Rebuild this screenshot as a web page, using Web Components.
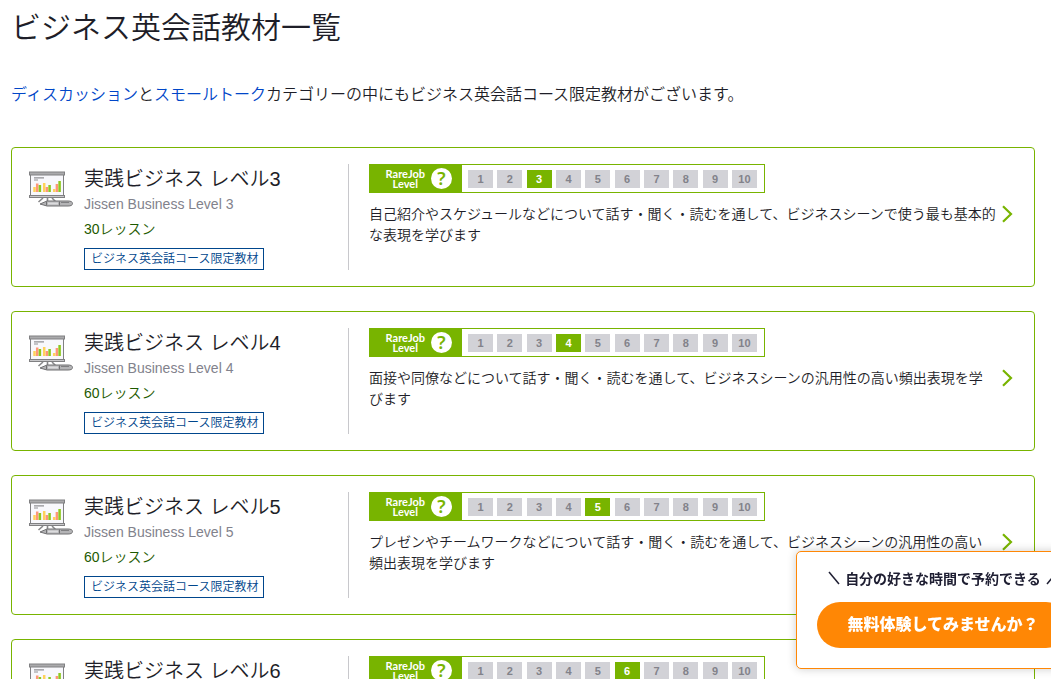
<!DOCTYPE html>
<html lang="ja">
<head>
<meta charset="utf-8">
<meta name="viewport" content="width=device-width, initial-scale=1">
<title>ビジネス英会話教材一覧</title>
<style>
  body {
    margin: 0;
    background: #fff;
    color: #1e1e28;
    font-family: "Liberation Sans", "Noto Sans CJK JP", sans-serif;
    font-size: 14px;
  }
</style>
</head>
<body>
<material-page></material-page>

<template id="page-template">
  <style>
    :host { display: block; padding: 8px 16px 24px 11px; }
    h1 { margin: 0; font-size: 30px; line-height: 40px; font-weight: 350; }
    p { margin: 35px 0 0; font-size: 16px; line-height: 24px; font-weight: 350; }
    a { color: #0046c8; text-decoration: none; }
    .list { display: grid; gap: 24px; margin-top: 40px; }
  </style>
  <h1>ビジネス英会話教材一覧</h1>
  <p><a href="#discussion">ディスカッション</a>と<a href="#smalltalk">スモールトーク</a>カテゴリーの中にもビジネス英会話コース限定教材がございます。</p>
  <div class="list">
    <material-card level="3" lessons="30">自己紹介やスケジュールなどについて話す・聞く・読むを通して、ビジネスシーンで使う最も基本的<br>な表現を学びます</material-card>
    <material-card level="4" lessons="60">面接や同僚などについて話す・聞く・読むを通して、ビジネスシーンの汎用性の高い頻出表現を学<br>びます</material-card>
    <material-card level="5" lessons="60">プレゼンやチームワークなどについて話す・聞く・読むを通して、ビジネスシーンの汎用性の高い<br>頻出表現を学びます</material-card>
    <material-card level="6" lessons="60"></material-card>
  </div>
  <trial-banner></trial-banner>
</template>

<template id="card-template">
  <style>
    :host { display: block; }
    .card {
      display: flex;
      min-height: 106px;
      padding: 16px;
      border: 1px solid #78b400;
      border-radius: 4px;
      color: inherit;
      text-decoration: none;
    }
    .summary {
      display: flex;
      flex: none;
      gap: 12px;
      width: 320px;
      border-right: 1px solid #c8c8cc;
    }
    board-icon { flex: none; margin-top: 6px; }
    .names { display: flex; flex-direction: column; align-items: flex-start; }
    h2 { margin: 0; font-size: 20px; line-height: 30px; font-weight: 350; }
    .en { font-size: 14px; line-height: 20px; color: #82828c; }
    .lessons { margin-top: 5px; font-size: 14px; line-height: 20px; font-weight: 350; color: #1e5a00; }
    .tag {
      margin-top: 9px;
      padding: 0 5px 0 6px;
      border: 1px solid #00468c;
      color: #00468c;
      font-size: 12px;
      line-height: 20px;
      font-weight: 350;
    }
    .detail { flex: 1; min-width: 0; padding-left: 20px; }
    .text { margin-top: 11px; font-size: 14px; line-height: 21px; font-weight: 350; }
    .arrow { flex: none; display: block; margin: 41px 5px 0 0; }
  </style>
  <a class="card" href="#material">
    <div class="summary">
      <board-icon></board-icon>
      <div class="names">
        <h2></h2>
        <div class="en"></div>
        <div class="lessons"></div>
        <div class="tag">ビジネス英会話コース限定教材</div>
      </div>
    </div>
    <div class="detail">
      <level-meter></level-meter>
      <div class="text"><slot></slot></div>
    </div>
    <svg class="arrow" width="11" height="18" viewBox="0 0 11 18" fill="none" stroke="#78b400" stroke-width="2.2" aria-hidden="true"><path d="M1 1.2 9 9 1 16.8"/></svg>
  </a>
</template>

<template id="meter-template">
  <style>
    :host {
      display: flex;
      box-sizing: border-box;
      width: 396px;
      height: 29px;
      border: 1px solid #78b400;
      font-family: "Liberation Sans", sans-serif;
    }
    .label {
      display: flex;
      align-items: center;
      justify-content: flex-end;
      gap: 6px;
      box-sizing: border-box;
      width: 92px;
      padding-right: 10px;
      background: #78b400;
      color: #fff;
      font: 700 11px/10px Lato, sans-serif;
      text-align: center;
    }
    .help {
      width: 21px;
      height: 21px;
      border-radius: 50%;
      background: #fff;
      color: #78b400;
      font: 600 18px/21px "Noto Sans", sans-serif;
    }
    ol {
      flex: 1;
      display: flex;
      align-items: center;
      justify-content: space-between;
      margin: 0;
      padding: 0 7px 0 6px;
      list-style: none;
    }
    li {
      width: 25px;
      background: #d2d2d7;
      color: #82828a;
      font-size: 11px;
      line-height: 18px;
      font-weight: 700;
      text-align: center;
    }
    li.on { background: #78b400; color: #fff; }
  </style>
  <div class="label"><span>RareJob<br>Level</span><span class="help">?</span></div>
  <ol></ol>
</template>

<template id="board-template">
  <style>
    :host { display: block; width: 44px; height: 38px; }
    svg { display: block; }
  </style>
  <svg width="46" height="38" viewBox="0 0 46 38" aria-hidden="true">
    <path d="M15 28 10.500 32M19.500 28v4M24 28l4 4" stroke="#88888a" stroke-width="1.600" fill="none"/>
    <rect x="2.500" y="4" width="33" height="22" fill="#f8f8fc" stroke="#808082"/>
    <rect x="1.500" y="2" width="35" height="3" fill="#aaaaac" stroke="#808082"/>
    <rect x="1.500" y="25.500" width="35" height="2" fill="#c8c8ca" stroke="#808082"/>
    <path d="M6 7.800h10M6 10h4" stroke="#909094" stroke-width="1.200"/>
    <g stroke-width="2.500">
      <path d="M6.500 22v-5M16.200 22v-9M26.200 22v-3" stroke="#ffd25a"/>
      <path d="M9.200 22v-8.500M18.900 22v-5M28.900 22v-8" stroke="#ff9678"/>
      <path d="M11.900 22v-7M21.600 22v-7M31.600 22V11" stroke="#8cc81e"/>
    </g>
    <path d="M12 34 19 31H40q4.500 0 4.500 2.500T40 36H19Z" fill="#b4b4b6" stroke="#707072"/>
    <path d="M18.500 31.500v4M31.500 31.500v4" stroke="#707072"/>
    <path d="M20 33.500h10" stroke="#dcdcde" stroke-width="2"/>
    <path d="M33 32.500h8" stroke="#808082"/>
  </svg>
</template>

<template id="banner-template">
  <style>
    :host {
      position: fixed;
      right: -39px;
      bottom: 10px;
      box-sizing: border-box;
      width: 294px;
      padding: 16px 20px 20px;
      border: 1px solid #ff8705;
      border-radius: 5px;
      background: #fff;
      box-shadow: 0 0 10px rgba(0, 0, 0, .2);
      text-align: center;
      font-family: "Noto Sans CJK JP", sans-serif;
    }
    .lead {
      display: flex;
      justify-content: center;
      align-items: center;
      gap: 5px;
      font-size: 14px;
      line-height: 20px;
      font-weight: 700;
      color: #1e1e32;
      white-space: nowrap;
    }
    button {
      display: block;
      width: 100%;
      height: 46px;
      margin-top: 14px;
      padding: 0 0 4px;
      border: 0;
      border-radius: 23px;
      background: #ff8705;
      color: #fff;
      font: 900 16px/24px "Noto Sans CJK JP", sans-serif;
    }
  </style>
  <div class="lead">
    <svg width="12" height="14" viewBox="0 0 12 14" stroke="#1e1e32" stroke-width="1.5" aria-hidden="true"><path d="M1 1 11 13"/></svg>
    <span>自分の好きな時間で予約できる</span>
    <svg width="12" height="14" viewBox="0 0 12 14" stroke="#1e1e32" stroke-width="1.5" aria-hidden="true"><path d="M11 1 1 13"/></svg>
  </div>
  <button type="button">無料体験してみませんか？</button>
</template>

<script>
  class TemplateElement extends HTMLElement {
    constructor() {
      super();
      const template = document.getElementById(this.constructor.templateId);
      this.attachShadow({ mode: 'open' }).append(template.content.cloneNode(true));
    }
  }

  class BoardIcon extends TemplateElement {
    static templateId = 'board-template';
  }

  class LevelMeter extends TemplateElement {
    static templateId = 'meter-template';
    static observedAttributes = ['value'];
    attributeChangedCallback() {
      const items = Array.from({ length: 10 }, (_, i) => {
        const li = document.createElement('li');
        li.textContent = i + 1;
        li.classList.toggle('on', i + 1 === Number(this.getAttribute('value')));
        return li;
      });
      this.shadowRoot.querySelector('ol').replaceChildren(...items);
    }
  }

  class MaterialCard extends TemplateElement {
    static templateId = 'card-template';
    connectedCallback() {
      const level = this.getAttribute('level');
      const find = (selector) => this.shadowRoot.querySelector(selector);
      find('h2').textContent = `実践ビジネス レベル${level}`;
      find('.en').textContent = `Jissen Business Level ${level}`;
      find('.lessons').textContent = `${this.getAttribute('lessons')}レッスン`;
      find('level-meter').setAttribute('value', level);
    }
  }

  class TrialBanner extends TemplateElement {
    static templateId = 'banner-template';
  }

  class MaterialPage extends TemplateElement {
    static templateId = 'page-template';
  }

  customElements.define('board-icon', BoardIcon);
  customElements.define('level-meter', LevelMeter);
  customElements.define('material-card', MaterialCard);
  customElements.define('trial-banner', TrialBanner);
  customElements.define('material-page', MaterialPage);
</script>
</body>
</html>
